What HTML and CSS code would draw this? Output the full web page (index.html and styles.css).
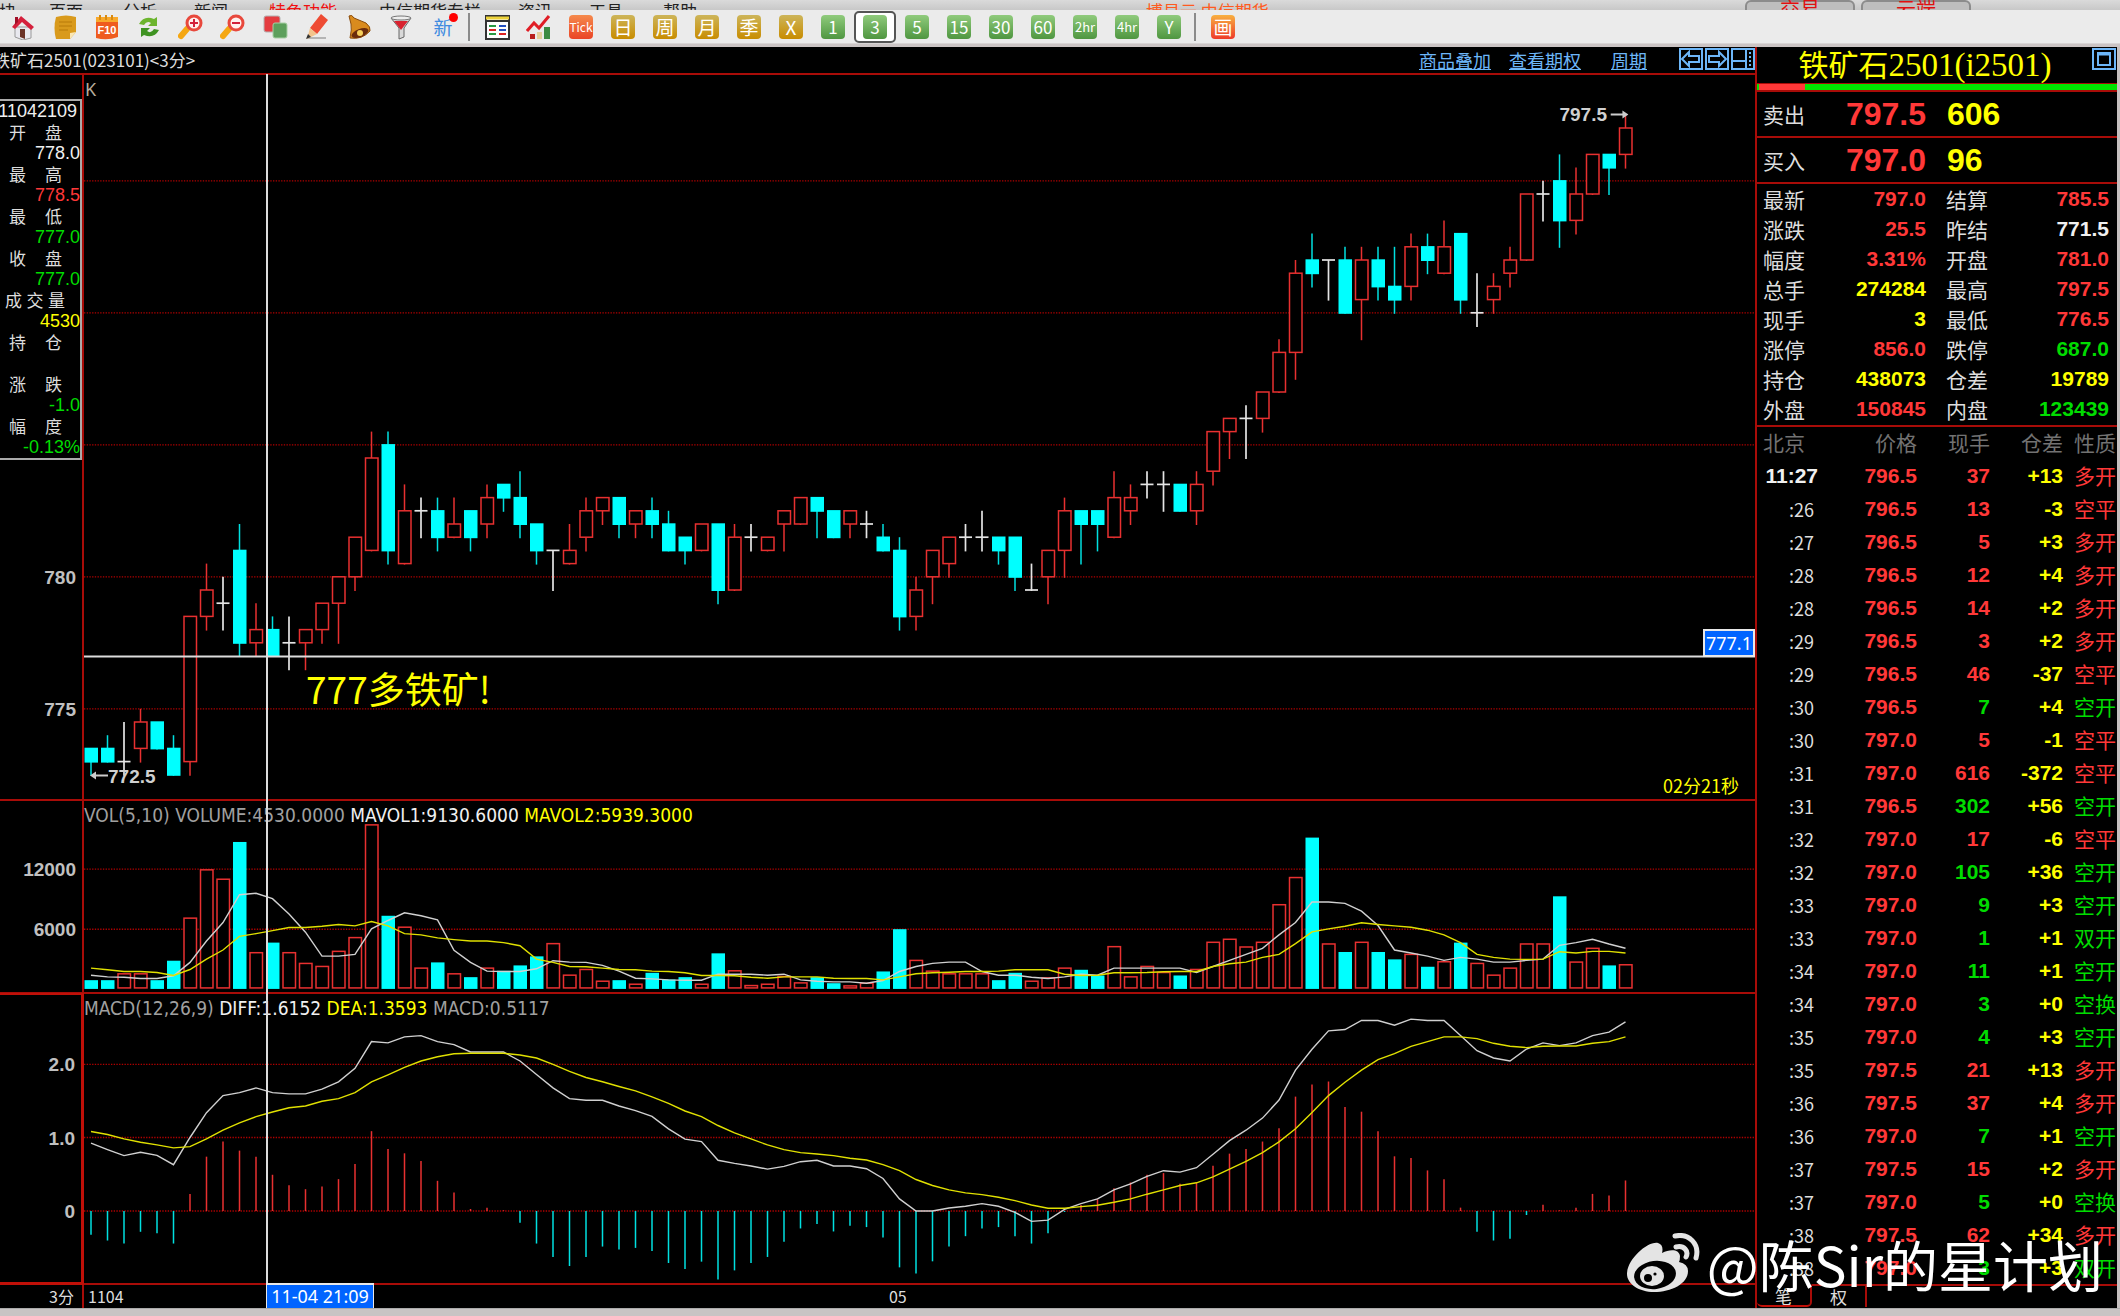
FILE: index.html
```html
<!DOCTYPE html>
<html lang="zh-CN">
<head>
<meta charset="utf-8">
<title>铁矿石2501 3分</title>
<link rel="stylesheet" href="styles.css">
</head>
<body>
<nav class="menu" aria-label="主菜单">
  <span class="m0">板块</span><span class="m1">页面</span><span class="m2">分析</span><span class="m3">新闻</span><span class="m4 hot">特色功能</span><span class="m5">中信期货专栏</span><span class="m6">资讯</span><span class="m7">工具</span><span class="m8">帮助</span><span class="m9 brand">博易云 中信期货</span>
  <button class="pill" type="button">交易</button><button class="pill" type="button">云端</button>
</nav>

<div class="toolbar" role="toolbar">
  <button type="button" aria-label="首页"><svg viewBox="0 0 26 26"><path d="M5 13h16v11l-8 2-8-3z" fill="#e9e9ef" stroke="#999"/><path d="M2 13 11 2l13 11-3 3-9-8-7 7z" fill="#d5203c"/><path d="M5 3h3v5l-3 3z" fill="#a01028"/><path d="M10 15h5v10l-5-2z" fill="#6b3327"/></svg></button>
  <button type="button" aria-label="公告"><svg viewBox="0 0 26 26"><path d="M4 3q10-3 20 0v15l-6 7H4q-3-11 0-22z" fill="#d99a1c"/><path d="M24 18l-6 7v-6z" fill="#fbe7b4"/><path d="M7 8h13M7 12h13M7 16h9" stroke="#b87a08"/></svg></button>
  <button type="button" aria-label="F10"><svg viewBox="0 0 26 26"><path d="M2 6h22v17q-11 4-22 1z" fill="#ef5b1e"/><path d="M2 3h22v5H2z" fill="#f8a92c"/><path d="M6 1v5M12 1v5M18 1v5" stroke="#d88a10" stroke-width="2"/><text x="13" y="20" class="f10">F10</text></svg></button>
  <button type="button" aria-label="刷新"><svg viewBox="0 0 26 26"><path d="M3 10Q8 1 18 5l3-2v9h-9l3-3q-4-3-7 2z" fill="#6cb52e"/><path d="M23 16q-5 9-15 5l-3 2v-9h9l-3 3q4 3 7-2z" fill="#3f9322"/></svg></button>
  <button type="button" aria-label="放大"><svg viewBox="0 0 26 26"><path d="M9 15 3 22" stroke="#f5a712" stroke-width="6" stroke-linecap="round"/><circle cx="16" cy="9" r="7" fill="#fff0ee" stroke="#e8483c" stroke-width="3"/><path d="M16 5v8M12 9h8" stroke="#d3203a" stroke-width="2"/></svg></button>
  <button type="button" aria-label="缩小"><svg viewBox="0 0 26 26"><path d="M9 15 3 22" stroke="#f5a712" stroke-width="6" stroke-linecap="round"/><circle cx="16" cy="9" r="7" fill="#fff0ee" stroke="#e8483c" stroke-width="3"/><path d="M12 9h8" stroke="#d3203a" stroke-width="2"/></svg></button>
  <button type="button" aria-label="叠加"><svg viewBox="0 0 26 26"><rect x="2" y="2" width="16" height="16" rx="2" fill="#e43c40" stroke="#b3b3b3"/><rect x="11" y="9" width="14" height="15" rx="2" fill="#5d9f5c" stroke="#a7cfa5"/></svg></button>
  <button type="button" aria-label="画线"><svg viewBox="0 0 26 26"><path d="M3 24h19" stroke="#b4b4b4" stroke-width="2"/><path d="M6 14 17 0l7 6-11 14z" fill="#ee4b33"/><path d="M6 14l7 6-10 5z" fill="#f3c48c"/><path d="M4 20l3 3-5 2z" fill="#333"/></svg></button>
  <button type="button" aria-label="预警"><svg viewBox="0 0 26 26"><path d="M3 2q3-2 5 2l12 5q5 4 4 8-8 9-20 7 2-9 1-14z" fill="#d98b1e" stroke="#8a4c0c"/><ellipse cx="14" cy="19" rx="9" ry="4" transform="rotate(-22 14 19)" fill="#6b2c0c"/><circle cx="14" cy="19" r="3" fill="#f6cf5a"/></svg></button>
  <button type="button" aria-label="筛选"><svg viewBox="0 0 26 26"><path d="M3 4h20l-7 10v9l-5 2V14z" fill="#d9d9d9" stroke="#666"/><path d="M6 7h14l-7 9z" fill="#d8222f"/><ellipse cx="13" cy="4" rx="10" ry="2" fill="#eee" stroke="#777"/></svg></button>
  <button type="button" class="new">新<i></i></button>
  <span class="sep"></span>
  <button type="button" aria-label="报价"><svg viewBox="0 0 26 26"><rect x="2" y="2" width="23" height="23" fill="#fff" stroke="#333" stroke-width="2"/><path d="M2 4h23" stroke="#ecd23a" stroke-width="3"/><path d="M2 7h23" stroke="#333" stroke-width="2"/><path d="M5 12h7M5 20h7" stroke="#2a9a44" stroke-width="2"/><path d="M15 12h7M15 16h7" stroke="#234fc0" stroke-width="2"/><path d="M5 16h7M15 20h7" stroke="#d22" stroke-width="2"/></svg></button>
  <button type="button" aria-label="走势"><svg viewBox="0 0 26 26"><path d="M4 20h5v5H4z" fill="#b81d1d"/><path d="M11 18h5v7h-5z" fill="#e5cf9c"/><path d="M18 13h6v12h-6z" fill="#3c8b42"/><path d="M1 17 8 9l5 5L23 2" fill="none" stroke="#e01e26" stroke-width="3"/></svg></button>
  <button type="button"><b class="k tick">Tick</b></button>
  <button type="button"><b class="k gold">日</b></button>
  <button type="button"><b class="k gold">周</b></button>
  <button type="button"><b class="k gold">月</b></button>
  <button type="button"><b class="k gold">季</b></button>
  <button type="button"><b class="k gold">X</b></button>
  <button type="button"><b class="k">1</b></button>
  <button type="button" class="on" aria-pressed="true"><b class="k">3</b></button>
  <button type="button"><b class="k">5</b></button>
  <button type="button"><b class="k">15</b></button>
  <button type="button"><b class="k">30</b></button>
  <button type="button"><b class="k">60</b></button>
  <button type="button"><b class="k small">2hr</b></button>
  <button type="button"><b class="k small">4hr</b></button>
  <button type="button"><b class="k">Y</b></button>
  <span class="sep"></span>
  <button type="button"><b class="k tick draw">画</b></button>
</div>

<main class="app">
  <section class="chart">
    <header class="chart-head">
      <h1>铁矿石2501(023101)&lt;3分&gt;</h1>
      <div class="links"><a href="#overlay">商品叠加</a><a href="#option">查看期权</a><a href="#period" class="period">周期</a></div>
      <div class="head-icons">
        <button type="button" aria-label="左移"><svg viewBox="0 0 24 22"><rect x="1" y="1" width="22" height="20"/><path d="M3 11l7-7v4h10v6H10v4z"/></svg></button>
        <button type="button" aria-label="右移"><svg viewBox="0 0 24 22"><rect x="1" y="1" width="22" height="20"/><path d="M21 11l-7-7v4H4v6h10v4z"/></svg></button>
        <button type="button" aria-label="布局"><svg viewBox="0 0 24 22"><rect x="1" y="1" width="22" height="20"/><path d="M1 13h14M15 1v20"/><path d="M19 4v14" stroke-dasharray="2 2"/></svg></button>
      </div>
    </header>

    <div class="scale" id="scale-price"></div>
    <div class="plot" id="plot-price">
      <svg class="draw-area" id="svg-price" viewBox="0 0 1671 724" preserveAspectRatio="none"></svg>
      <p class="legend key">K</p>
      <span class="mark low" id="mark-low"><svg viewBox="0 0 18 10"><path d="M5 5h13" stroke="#ccc" stroke-width="2"/><path d="M0 5l6-4v8z" fill="#ccc"/></svg>772.5</span>
      <span class="mark high" id="mark-high">797.5<svg viewBox="0 0 18 10"><path d="M0 5h13" stroke="#ccc" stroke-width="2"/><path d="M18 5l-6-4v8z" fill="#ccc"/></svg></span>
      <span class="note" id="note">777多铁矿!</span>
      <span class="count">02分21秒</span>
      <output class="tag price-tag" id="tag">777.1</output>
    </div>

    <div class="scale" id="scale-vol"></div>
    <div class="plot" id="plot-vol">
      <svg class="draw-area" id="svg-vol" viewBox="0 0 1671 191" preserveAspectRatio="none"></svg>
      <p class="legend">VOL(5,10) VOLUME:4530.0000 <span class="w">MAVOL1:9130.6000</span> <span class="y">MAVOL2:5939.3000</span></p>
    </div>

    <div class="scale framed" id="scale-macd"></div>
    <div class="plot" id="plot-macd">
      <svg class="draw-area" id="svg-macd" viewBox="0 0 1671 289" preserveAspectRatio="none"></svg>
      <p class="legend">MACD(12,26,9) <span class="w">DIFF:1.6152</span> <span class="y">DEA:1.3593</span> MACD:0.5117</p>
    </div>

    <div class="axis unit">3分</div>
    <div class="axis dates"><span>1104</span><span class="day" id="day">05</span></div>

    <div class="cross"></div>
    <div class="tag date-tag">11-04 21:09</div>

    <aside class="info">
      <p class="w stamp">11042109</p>
      <p class="t"><span>开</span><span>盘</span></p><p class="w">778.0</p>
      <p class="t"><span>最</span><span>高</span></p><p class="u">778.5</p>
      <p class="t"><span>最</span><span>低</span></p><p class="d">777.0</p>
      <p class="t"><span>收</span><span>盘</span></p><p class="d">777.0</p>
      <p class="t three"><span>成</span><span>交</span><span>量</span></p><p class="y">4530</p>
      <p class="t"><span>持</span><span>仓</span></p><p></p>
      <p class="t"><span>涨</span><span>跌</span></p><p class="d">-1.0</p>
      <p class="t"><span>幅</span><span>度</span></p><p class="d">-0.13%</p>
    </aside>
  </section>

  <section class="quote">
    <header class="quote-head"><h2><span>铁矿石</span>2501(i2501)</h2><button type="button" aria-label="最大化"><svg viewBox="0 0 24 22"><rect x="1" y="1" width="22" height="20"/><rect x="6" y="5" width="12" height="12"/><path d="M6 6h12" stroke-width="3"/></svg></button></header>
    <div class="ratio"><span></span></div>
    <dl class="bid"><dt>卖出</dt><dd class="u">797.5</dd><dd class="y">606</dd></dl>
    <dl class="bid"><dt>买入</dt><dd class="u">797.0</dd><dd class="y">96</dd></dl>
    <table class="stats">
      <tr><th>最新</th><td class="u">797.0</td><th>结算</th><td class="u">785.5</td></tr>
      <tr><th>涨跌</th><td class="u">25.5</td><th>昨结</th><td class="w">771.5</td></tr>
      <tr><th>幅度</th><td class="u">3.31%</td><th>开盘</th><td class="u">781.0</td></tr>
      <tr><th>总手</th><td class="y">274284</td><th>最高</th><td class="u">797.5</td></tr>
      <tr><th>现手</th><td class="y">3</td><th>最低</th><td class="u">776.5</td></tr>
      <tr><th>涨停</th><td class="u">856.0</td><th>跌停</th><td class="d">687.0</td></tr>
      <tr><th>持仓</th><td class="y">438073</td><th>仓差</th><td class="y">19789</td></tr>
      <tr><th>外盘</th><td class="u">150845</td><th>内盘</th><td class="d">123439</td></tr>
    </table>
    <table class="ticks">
      <thead><tr><th>北京</th><th>价格</th><th>现手</th><th>仓差</th><th>性质</th></tr></thead>
      <tbody>
      <tr class="u first"><td>11:27</td><td>796.5</td><td>37</td><td>+13</td><td>多开</td></tr>
      <tr class="u"><td>:26</td><td>796.5</td><td>13</td><td>-3</td><td>空平</td></tr>
      <tr class="u"><td>:27</td><td>796.5</td><td>5</td><td>+3</td><td>多开</td></tr>
      <tr class="u"><td>:28</td><td>796.5</td><td>12</td><td>+4</td><td>多开</td></tr>
      <tr class="u"><td>:28</td><td>796.5</td><td>14</td><td>+2</td><td>多开</td></tr>
      <tr class="u"><td>:29</td><td>796.5</td><td>3</td><td>+2</td><td>多开</td></tr>
      <tr class="u"><td>:29</td><td>796.5</td><td>46</td><td>-37</td><td>空平</td></tr>
      <tr class="d"><td>:30</td><td>796.5</td><td>7</td><td>+4</td><td>空开</td></tr>
      <tr class="u"><td>:30</td><td>797.0</td><td>5</td><td>-1</td><td>空平</td></tr>
      <tr class="u"><td>:31</td><td>797.0</td><td>616</td><td>-372</td><td>空平</td></tr>
      <tr class="d"><td>:31</td><td>796.5</td><td>302</td><td>+56</td><td>空开</td></tr>
      <tr class="u"><td>:32</td><td>797.0</td><td>17</td><td>-6</td><td>空平</td></tr>
      <tr class="d"><td>:32</td><td>797.0</td><td>105</td><td>+36</td><td>空开</td></tr>
      <tr class="d"><td>:33</td><td>797.0</td><td>9</td><td>+3</td><td>空开</td></tr>
      <tr class="d"><td>:33</td><td>797.0</td><td>1</td><td>+1</td><td>双开</td></tr>
      <tr class="d"><td>:34</td><td>797.0</td><td>11</td><td>+1</td><td>空开</td></tr>
      <tr class="d"><td>:34</td><td>797.0</td><td>3</td><td>+0</td><td>空换</td></tr>
      <tr class="d"><td>:35</td><td>797.0</td><td>4</td><td>+3</td><td>空开</td></tr>
      <tr class="u"><td>:35</td><td>797.5</td><td>21</td><td>+13</td><td>多开</td></tr>
      <tr class="u"><td>:36</td><td>797.5</td><td>37</td><td>+4</td><td>多开</td></tr>
      <tr class="d"><td>:36</td><td>797.0</td><td>7</td><td>+1</td><td>空开</td></tr>
      <tr class="u"><td>:37</td><td>797.5</td><td>15</td><td>+2</td><td>多开</td></tr>
      <tr class="d"><td>:37</td><td>797.0</td><td>5</td><td>+0</td><td>空换</td></tr>
      <tr class="u"><td>:38</td><td>797.5</td><td>62</td><td>+34</td><td>多开</td></tr>
      <tr class="d"><td>:38</td><td>797.0</td><td>3</td><td>+3</td><td>双开</td></tr>
      </tbody>
    </table>
    <div class="tabs"><button type="button" class="active">笔</button><button type="button">权</button><span></span></div>
  </section>

  <div class="credit">
    <svg viewBox="0 0 74 60"><path fill="#e4e4e4" d="M0 41C0 27 20 8 31 10q6 2 4 10c8-4 17-4 18 3q0 4-1 6 9 2 9 9C61 51 44 59 27 59 12 59 0 51 0 41z"/><ellipse cx="28" cy="42" rx="21" ry="14" transform="rotate(-7 28 42)" fill="#000"/><ellipse cx="25" cy="43" rx="12" ry="10" fill="#e4e4e4"/><circle cx="21" cy="45" r="4" fill="#000"/><circle cx="28" cy="41" r="1.6" fill="#000"/><path d="M48 3C62 0 73 11 69 25M49 14c8-2 13 4 10 10" fill="none" stroke="#e4e4e4" stroke-width="5" stroke-linecap="round"/></svg>
    <span>@陈Sir的星计划</span>
  </div>
</main>
<footer class="status"></footer>
<script src="chart.js"></script>
</body>
</html>
```
FILE: styles.css
```css
* { box-sizing: border-box; margin: 0; padding: 0; }
body {
  display: flex; flex-direction: column; min-height: 100vh; overflow-x: hidden;
  background: #c6c0c0; color: #ddd;
  font: 18px/21px "Liberation Sans", "Noto Sans CJK SC", sans-serif;
}
button { border: 0; background: none; font: inherit; color: inherit; }
svg { display: block; }
.u { color: #ff3838; }
.d { color: #00dc00; }
.y { color: #ffff00; }
.w { color: #f0f0f0; }

/* menu strip */
.menu {
  display: grid; height: 10px; overflow: hidden; color: #222;
  grid-template-columns: 49px 74px 71px 75px 110px 139px 71px 74px 483px 599px 116px 116px 1fr;
  align-items: end; background: linear-gradient(#dadada, #c8c8c8);
  font: 17px/20px "Noto Sans CJK SC", sans-serif; white-space: nowrap;
}
.menu span { margin-bottom: 7px; height: 20px; }
.menu .m0 { text-indent: -18px; }
.hot { color: #f01010; }
.brand { color: #ff5a20; }
.pill {
  width: 110px; height: 24px; margin-bottom: 4px; padding-bottom: 6px; color: #e01010; font-size: 20px; line-height: 14px;
  background: #bebebe; border: 2px solid #8c8c8c; border-radius: 6px;
}

/* toolbar */
.toolbar {
  display: flex; align-items: center; height: 37px; padding: 0 2px;
  background: #ebebeb; border-bottom: 3px solid #cbc4c4; box-shadow: inset 0 -1px #d8d4d4;
}
.toolbar button { flex: none; display: grid; place-items: center; width: 42px; height: 32px; }
.toolbar svg { width: 26px; height: 26px; }
.f10 { font: bold 11px "Liberation Sans", sans-serif; fill: #fff; text-anchor: middle; }
.sep { flex: none; width: 12px; height: 28px; border-left: 2px solid #8b8b8b; margin-left: 4px; margin-right: -4px; }
.k {
  display: grid; place-items: center; width: 24px; height: 24px; border-radius: 4px; color: #fff;
  background: linear-gradient(#90cb7c, #4f9640); font: 17px/24px "Noto Sans CJK SC", sans-serif;
}
.k.gold { background: linear-gradient(#cdb55a, #c88c00); font-size: 19px; }
.k.tick { background: linear-gradient(#f58a4c, #ea4426); font-size: 12px; }
.k.draw { background: linear-gradient(#f8b040, #ee3a28); font-size: 19px; }
.k.small { font-size: 13px; }
.toolbar .on { background: #fff; border: 2px solid #555; border-radius: 5px; }
.toolbar .new { position: relative; color: #3f8be0; font: 19px/24px "Noto Sans CJK SC", sans-serif; }
.new i { position: absolute; right: 6px; top: 2px; width: 9px; height: 9px; border-radius: 50%; background: #f00; }

/* main split */
.app {
  position: relative; display: grid; grid-template-columns: minmax(0, 1fr) 362px;
  flex: 1; margin-right: 3px; background: #000;
}
.status { height: 8px; background: #c8c4c4; border-top: 1px solid #aaa; }

/* chart */
.chart {
  position: relative; display: grid; min-width: 0;
  grid-template-columns: 84px minmax(0, 1fr);
  grid-template-rows: 28px 726fr 193fr 291fr 23px;
}
.chart-head {
  grid-column: 1 / -1; display: flex; align-items: center; justify-content: flex-end;
  border-bottom: 2px solid #a80c08; overflow: hidden;
}
.chart-head h1 { margin-left: -7px; margin-right: auto; font: 17px/24px "Noto Sans CJK SC", sans-serif; color: #ddd; white-space: nowrap; }
.links { display: flex; gap: 18px; margin-right: 32px; }
.links a { color: #6db6f8; font: 18px/24px "Noto Sans CJK SC", sans-serif; }
.links .period { margin-left: 12px; }
.head-icons { display: flex; gap: 2px; margin-bottom: 3px; }
.head-icons svg, .quote-head svg { width: 24px; height: 22px; fill: none; stroke: #6db6f8; stroke-width: 2; }

.scale { position: relative; border-right: 2px solid #a80c08; border-bottom: 2px solid #a80c08; }
.scale.framed { border: solid #c01008; border-width: 2px 3px 3px 0; margin-top: -1px; }
.scale span { position: absolute; right: 6px; transform: translateY(-50%); font-size: 19px; font-weight: bold; color: #c0c0c0; }
.plot { position: relative; border-bottom: 2px solid #a80c08; }
.draw-area { position: absolute; inset: 0; width: 100%; height: 100%; }
.legend {
  position: relative; padding: 4px 0; color: #a0a0a0; white-space: nowrap;
  font: 19px/21px "DejaVu Sans Condensed", "Noto Sans", sans-serif;
}
.legend.key { padding: 4px 1px; color: #b8ac9c; font: 18px/21px "Noto Sans", sans-serif; }
.axis { font: 16px/22px "Noto Sans CJK SC", sans-serif; color: #ddd; }
.axis.unit { padding-right: 8px; text-align: right; border-right: 2px solid #a80c08; }
.axis.dates { position: relative; padding-left: 4px; }
.day { position: absolute; transform: translateX(-50%); }

.grid { stroke: #b00000; stroke-dasharray: 1.35 1.35; stroke-width: 1.35; }
.up { stroke: #e83030; fill: #000; stroke-width: 1.5; }
.down { stroke: #00e0e0; stroke-width: 1.5; }
.down-body { fill: #00ffff; }
.flat { stroke: #e4e4e4; stroke-width: 1.7; }
.fast { stroke: #d0d0d0; fill: none; stroke-width: 1.4; }
.slow { stroke: #e0e000; fill: none; stroke-width: 1.4; }
.level { stroke: #dcdcdc; stroke-width: 2; }

.mark { position: absolute; display: flex; align-items: center; transform: translateY(-50%); font-size: 19px; font-weight: bold; color: #d0d0d0; }
.mark svg { width: 18px; height: 10px; }
.mark.high { transform: translate(-100%, -50%); gap: 3px; }
.note { position: absolute; color: #ffff00; font: 37px/40px "Noto Sans CJK SC", sans-serif; transform: translateY(-50%); white-space: nowrap; }
.count { position: absolute; right: 16px; bottom: 3px; color: #ffff00; font: 18px/22px "Noto Sans CJK SC", sans-serif; }
.tag { position: absolute; background: #0064ff; color: #fff; border: 2px solid #e8e8e8; font: 18px/24px "Noto Sans", sans-serif; white-space: nowrap; }
.price-tag { right: 0; padding: 0 1px; transform: translateY(-100%); }
.date-tag { left: 266px; bottom: 0; width: 108px; height: 25px; line-height: 22px; text-align: center; border-width: 2px 1px 0; }
.cross { position: absolute; left: 266px; top: 27px; bottom: 23px; width: 2px; background: #dcdcdc; }

.info { position: absolute; left: 0; top: 52px; width: 82px; background: #000; border: solid #aaa; border-width: 2px 2px 2px 0; }
.info p { height: 21px; text-align: right; display: flex; justify-content: flex-end; }
.info .stamp { padding-right: 3px; }
.info .t { justify-content: space-between; padding: 0 18px 0 9px; font: 17px/20px "Noto Sans CJK SC", sans-serif; color: #ddd; }
.info .three { padding: 0 15px 0 5px; }

/* quote panel */
.quote { display: flex; flex-direction: column; border-left: 2px solid #a80c08; }
.quote-head { display: flex; align-items: flex-start; height: 36px; padding: 1px 1px 0; }
.quote-head h2 { flex: 1; text-align: center; color: #ffff00; font: 33px/34px "Liberation Serif", "Noto Sans CJK SC", serif; white-space: nowrap; }
.quote-head h2 span { font-size: 30px; }
.ratio { height: 9px; padding: 0 2px; border: solid #a80c08; border-width: 1px 0 2px; background: #00e600; }
.ratio span { display: block; width: 13%; height: 100%; background: #ff3838; }
.bid { display: grid; grid-template-columns: 52px 117px 1fr; height: 46px; padding-left: 6px; align-items: center; border-bottom: 2px solid #a80c08; }
.bid dt, .stats th, .ticks th, .ticks td:last-child { font: 21px/24px "Noto Sans CJK SC", sans-serif; }
.bid dd { font: bold 32px/40px "Liberation Sans", sans-serif; text-align: right; }
.bid dd + dd { text-align: left; padding-left: 15px; }
.bid dd:nth-child(2) { padding-left: 0; margin-right: 6px; }
table { border-collapse: collapse; table-layout: fixed; width: 100%; }
.stats { width: 354px; margin-left: 6px; }
.stats tr { height: 30px; }
.stats th { width: 60px; text-align: left; }
.stats td { text-align: right; font: bold 21px/24px "Liberation Sans", sans-serif; padding-right: 15px; }
.stats td:last-child { padding-right: 8px; }
.stats td:nth-child(2) { width: 123px; padding-right: 20px; }
.ticks { border-top: 2px solid #a80c08; margin-top: 1px; }
.ticks tr { height: 33px; }
.ticks th { color: #727272; text-align: right; white-space: nowrap; padding-bottom: 2px; }
.ticks th:first-child { text-align: left; padding-left: 6px; width: 61px; }
.ticks th:nth-child(2) { width: 99px; }
.ticks th:nth-child(3) { width: 73px; }
.ticks th:nth-child(4) { width: 73px; }
.ticks td { text-align: right; font: bold 21px/24px "Liberation Sans", sans-serif; }
.ticks td:first-child { padding-right: 4px; font: 18px/24px "Noto Sans CJK SC", sans-serif; color: #ddd; }
.ticks .first td:first-child { padding-right: 0; font: bold 21px/24px "Liberation Sans", sans-serif; color: #f0f0f0; }
.ticks td:nth-child(2) { color: #ff3838; }
.ticks td:nth-child(4) { color: #ffff00; }
.ticks td:last-child, .ticks th:last-child { padding: 0 1px 2px 0; }
.tabs { display: flex; height: 23px; }
.tabs button { width: 55px; font: 17px/20px "Noto Sans CJK SC", sans-serif; border-top: 2px solid #a80c08; border-right: 2px solid #a80c08; }
.tabs .active { border-top-color: transparent; border-bottom: 2px solid #c01008; border-radius: 0 0 5px 5px; }
.tabs span { flex: 1; border-top: 2px solid #a80c08; }

.credit { position: absolute; right: 14px; bottom: 13px; display: flex; align-items: center; gap: 6px; color: #fff; font: 55px/64px "Noto Sans CJK SC", sans-serif; white-space: nowrap; }
.credit svg { width: 74px; height: 60px; }
```
FILE: chart.js
```js
// Each bar: type, body top, body bottom, high, low. Levels are half points away from 780.
const bars = `c-13,-14,-13,-15 c-13,-14,-12,-14 w-14,-14,-11,-15 r-11,-13,-10,-14 c-11,-13,-11,-13 c-13,-15,-12,-15 r-3,-14,-3,-15
r-1,-3,1,-4 w-2,-2,0,-4 c2,-5,4,-6 r-4,-5,-2,-6 c-4,-6,-3,-6 w-5,-5,-3,-7 r-4,-5,-4,-7 r-2,-4,-2,-5 r0,-2,0,-5 r3,0,3,-1 r9,2,11,2
c10,2,11,1 r5,1,7,1 w5,5,6,3 c5,3,6,2 r4,3,6,3 c5,3,5,2 r6,4,7,3 c7,6,7,5 c6,4,8,3 c4,2,4,1 w2,2,2,-1 r2,1,4,1 r5,3,6,2 r6,5,6,4
c6,4,6,3 r5,4,5,3 c5,4,6,3 c4,2,5,2 c3,2,3,1 r4,2,4,2 c4,-1,4,-2 r3,-1,4,-1 w3,3,4,2 r3,2,3,2 r5,4,5,2 r6,4,6,4 c6,5,6,3 c5,3,5,3
r5,4,5,3 w4,4,5,3 c3,2,4,2 c2,-3,3,-4 r-1,-3,0,-4 r2,0,2,-2 r3,1,3,0 w3,3,4,2 w3,3,5,2 c3,2,3,1 c3,0,3,-1 w-1,-1,1,-1 r2,0,2,-2
r5,2,6,0 c5,4,5,1 c5,4,5,2 r6,3,8,3 r6,5,7,4 w7,7,8,6 w7,7,8,5 c7,5,7,5 r7,5,8,4 r11,8,11,7 r12,11,12,9 w12,12,13,9 r14,12,14,11
r17,14,18,14 r23,17,24,15 c24,23,26,22 w24,24,24,21 c24,20,25,20 r24,21,25,18 c24,22,25,21 c22,21,25,20 r25,22,26,21 c25,24,26,23
r25,23,27,23 c26,21,26,20 w20,20,23,19 r22,21,23,20 r24,23,25,22 r29,24,29,24 w29,29,30,27 c30,27,32,25 r29,27,31,26 r32,29,32,29
c32,31,32,29 r34,32,35,31`.split(/\s+/).map(s => [s[0], ...s.slice(1).split(",").map(Number)]);

// Indicator series are kept on a sheet that has 2.981 units to the pixel.
const list = s => s.trim().split(/\s+/).map(Number);
const volume = list(`569 569 548 548 569 511 382 238 266 157 485 457 485 517 526 481 440 104 377 409 531 516 548 560 531 541 525 498 458
552 535 570 569 579 547 567 560 579 489 539 583 579 556 575 560 578 584 576 543 417 508 540 548 548 548 569 547 570 560 531 538 555 467
557 526 544 555 535 454 445 468 454 342 261 144 459 485 454 485 507 490 529 512 457 517 552 531 459 459 319 513 472 525 521`);
const ma5 = list(`552 557 558 562 562 554 514 450 395 312 308 324 370 424 495 495 490 414 389 366 375 387 478 514 540 541 541 533 509 513
514 523 540 561 563 566 567 567 549 549 549 552 549 566 570 572 572 576 568 541 526 517 513 513 541 552 552 558 562 557 549 552 531 531
531 531 531 544 526 508 490 472 432 395 334 334 338 361 404 477 486 495 508 499 504 513 513 508 504 463 455 445 459 472`);
const ma10 = list(`531 536 541 541 544 553 535 504 477 436 428 419 410 410 406 401 405 392 405 428 432 441 446 450 450 455 464 504 514
526 527 531 535 536 540 541 545 553 553 554 558 561 557 557 557 561 562 562 566 557 548 545 543 541 541 540 536 536 536 549 553 552 545
545 544 542 541 541 526 518 513 499 490 458 423 414 406 396 401 405 409 418 432 455 490 499 504 505 504 482 486 481 481 486`);
const diff = list(`1053 1072 1090 1080 1089 1117 1036 962 911 902 888 902 906 906 892 870 830 750 754 736 732 750 759 781 781 781 808 848
888 920 925 925 942 956 973 1010 1041 1048 1104 1113 1121 1130 1122 1108 1104 1121 1121 1129 1158 1219 1255 1255 1246 1241 1233 1241 1259
1286 1282 1250 1233 1219 1192 1174 1152 1135 1139 1126 1086 1045 1014 978 924 835 773 718 714 687 687 701 683 687 687 732 777 799 808 772
754 762 754 732 722 691`);
const dea = list(`1018 1027 1040 1050 1058 1067 1063 1040 1014 992 974 960 947 942 928 920 902 870 849 827 808 795 786 785 785 785 790
799 818 839 857 870 884 897 915 934 957 974 1000 1022 1040 1058 1072 1081 1085 1090 1098 1103 1117 1135 1161 1179 1192 1201 1206 1214
1224 1237 1247 1247 1242 1238 1229 1219 1205 1192 1179 1171 1153 1130 1107 1081 1049 1010 961 911 871 835 804 786 764 750 736 736 741 755
764 768 764 763 763 755 750 736`);
const hist = list(`1326 1343 1352 1317 1321 1352 1204 1093 1048 1075 1093 1147 1178 1190 1182 1160 1115 1017 1070 1083 1106 1165 1200 1249
1245 1253 1290 1352 1392 1419 1392 1361 1370 1365 1374 1410 1428 1406 1459 1432 1410 1392 1347 1307 1294 1316 1299 1303 1334 1423 1441
1405 1361 1330 1307 1303 1330 1352 1321 1258 1237 1220 1187 1170 1147 1142 1174 1170 1120 1084 1070 1048 1008 914 878 869 945 959 1017
1092 1097 1134 1160 1245 1317 1343 1338 1267 1236 1253 1245 1204 1209 1164`);

const W = 1671;
const x = i => 7 + 16.5 * i;
const $ = id => document.getElementById(id);
const line = (cls, x1, y1, x2, y2) => `<line class="${cls}" x1="${x1}" y1="${y1}" x2="${x2}" y2="${y2}"/>`;
const box = (cls, cx, top, bottom) => cls === "up"
  ? `<rect class="up" x="${cx - 6}" y="${top}" width="12.5" height="${Math.max(1, bottom - top)}"/>`
  : `<rect class="down-body" x="${cx - 6.5}" y="${top - 0.7}" width="13.5" height="${bottom - top + 1.7}"/>`;
const curve = (cls, data, y) => `<polyline class="${cls}" points="${data.map((v, i) => x(i) + "," + y(v).toFixed(1)).join(" ")}"/>`;

function scale(id, height, marks) {
  $(id).innerHTML = marks
    .map(([t, y]) => `<span style="top:${(y / height * 100).toFixed(2)}%">${t}</span>`).join("");
}
const grid = ys => ys.map(y => line("grid", 0, y, W, y)).join("");
function place(id, px, py, h) {
  $(id).style.left = (px / W * 100).toFixed(2) + "%";
  $(id).style.top = (py / h * 100).toFixed(2) + "%";
}

// Price
const py = n => 501.8 - n * 13.2;
let out = grid([30, 20, 10, 0, -10].map(py));
bars.forEach(([t, top, bot, hi, lo], i) => {
  const c = x(i);
  if (t === "w") {
    out += line("flat", c, py(hi), c, py(lo) + 1) + line("flat", c - 6.5, py(top), c + 6.5, py(top));
  } else {
    const cls = t === "r" ? "up" : "down";
    out += line(cls, c, py(hi), c, py(top)) + line(cls, c, py(bot), c, py(lo) + 1) + box(cls, c, py(top), py(bot));
  }
});
$("svg-price").innerHTML = out + line("level", 0, 581.5, W, 581.5);
scale("scale-price", 724, [["780", py(0)], ["775", py(-10)]]);
place("mark-low", 6, 701, 724);
place("mark-high", 1544, 39, 724);
place("note", 222, 613, 724);
$("tag").style.top = (581.5 / 724 * 100).toFixed(2) + "%";
$("day").style.left = "48.7%";

// Volume
const vy = v => v / 2.981 - 11;
out = grid([236, 415].map(vy));
volume.forEach((v, i) => { out += box(bars[i][0] === "c" ? "down" : "up", x(i), vy(v), vy(590)); });
$("svg-vol").innerHTML = out + curve("fast", ma5, vy) + curve("slow", ma10, vy);
scale("scale-vol", 191, [["12000", vy(235)], ["6000", vy(413)]]);

// MACD
const my = v => v / 2.981 - 204;
out = grid([818, 1036, 1255].map(my));
hist.forEach((v, i) => { out += line(v < 1255 ? "up" : "down", x(i), my(1255), x(i), my(v)); });
$("svg-macd").innerHTML = out + curve("fast", diff, my) + curve("slow", dea, my);
scale("scale-macd", 289, [["2.0", my(816)], ["1.0", my(1036)], ["0", my(1255)]]);
```
